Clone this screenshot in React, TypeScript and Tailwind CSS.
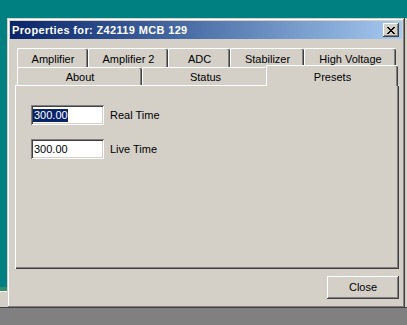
import React from "react";

const raised =
  "shadow-[inset_-1px_-1px_#404040,inset_1px_1px_#ffffff,inset_-2px_-2px_#808080,inset_2px_2px_#d4d0c8]";
const raisedDialog =
  "shadow-[inset_-1px_-1px_#404040,inset_1px_1px_#d4d0c8,inset_-2px_-2px_#808080,inset_2px_2px_#ffffff]";
const sunken =
  "shadow-[inset_1px_1px_#808080,inset_-1px_-1px_#ffffff,inset_2px_2px_#404040,inset_-2px_-2px_#d4d0c8]";

function Tab({ label, w, h }: { label: string; w: string; h: string }) {
  return (
    <div
      className={`${w} ${h} flex items-center justify-center pt-[2px] border-l border-t border-white rounded-t-[2px] shadow-[inset_-1px_0_#404040,inset_-2px_0_#808080] bg-[#d4d0c8] text-black`}
    >
      {label}
    </div>
  );
}

function Field({ value, label, selected }: { value: string; label: string; selected?: boolean }) {
  return (
    <div className="flex items-center">
      <div className={`w-[73px] h-[20px] bg-white ${sunken} flex items-center pl-[2px]`}>
        <span
          className={
            selected
              ? "bg-[#0a246a] text-white leading-[13px] pl-[1px]"
              : "text-black leading-[13px] pl-[1px]"
          }
        >
          {value}
        </span>
      </div>
      <span className="ml-[6px] text-black">{label}</span>
    </div>
  );
}

export default function App() {
  return (
    <div
      className="w-[407px] h-[325px] bg-[#008080] flex flex-col overflow-hidden text-[11px]"
      style={{ fontFamily: '"Liberation Sans", Arial, sans-serif' }}
    >
      <div className="h-[18px] shrink-0" />
      <div className="h-[290px] flex shrink-0">
        {/* left strip */}
        <div className="w-[7px] flex flex-col">
          <div className="flex-1 bg-[#008080]" />
          <div className="h-[4px] bg-[#2f8f6a]" />
          <div className="h-[1px] bg-white" />
          <div className="h-[15px] bg-[#d4d0c8]" />
          <div className="h-[1px] bg-[#404040]" />
        </div>
        {/* dialog */}
        <div className={`w-[398px] h-[290px] bg-[#d4d0c8] ${raisedDialog} flex flex-col pt-[3px] px-[3px]`}>
          <div className="h-[18px] flex items-center bg-gradient-to-r from-[#0a246a] to-[#a6caf0] pl-[2px] pr-[3px]">
            <span className="text-white font-bold text-[11px] tracking-[0.35px] leading-none flex-1">
              Properties for: Z42119 MCB 129
            </span>
            <div className={`w-[16px] h-[14px] bg-[#d4d0c8] ${raised} flex items-center justify-center`}>
              <svg width="8" height="7" viewBox="0 0 8 7" shapeRendering="crispEdges">
                <path
                  d="M0 0h2v1h-2zM6 0h2v1h-2zM1 1h2v1h-2zM5 1h2v1h-2zM2 2h4v1h-4zM3 3h2v1h-2zM2 4h4v1h-4zM1 5h2v1h-2zM5 5h2v1h-2zM0 6h2v1h-2zM6 6h2v1h-2z"
                  fill="#000"
                />
              </svg>
            </div>
          </div>
          <div className="h-[9px]" />
          <div className="ml-[5px] w-[384px] flex flex-col">
            <div className="h-[19px] flex pl-[2px]">
              <Tab label="Amplifier" w="w-[71px]" h="h-[19px]" />
              <Tab label="Amplifier 2" w="w-[80px]" h="h-[19px]" />
              <Tab label="ADC" w="w-[62px]" h="h-[19px]" />
              <Tab label="Stabilizer" w="w-[74px]" h="h-[19px]" />
              <Tab label="High Voltage" w="w-[92px]" h="h-[19px]" />
            </div>
            <div className="h-[18px] flex items-end pl-[2px] relative z-10">
              <Tab label="About" w="w-[125px]" h="h-[18px]" />
              <Tab label="Status" w="w-[126px]" h="h-[18px]" />
              <div className="w-[132px] h-[21px] -mx-[2px] -mb-[1px] flex justify-center pt-[3px] border-l border-t border-white rounded-t-[2px] shadow-[inset_-1px_0_#404040,inset_-2px_0_#808080] bg-[#d4d0c8] text-black">
                Presets
              </div>
            </div>
            <div className="h-[184px] border-l border-t border-white shadow-[inset_-1px_-1px_#404040,inset_-2px_-2px_#808080] flex flex-col pl-[15px] pt-[19px] gap-[14px]">
              <Field value="300.00" label="Real Time" selected />
              <Field value="300.00" label="Live Time" />
            </div>
          </div>
          <div className="h-[7px]" />
          <div className="flex justify-end pr-[3px]">
            <div className={`w-[72px] h-[23px] ${raised} flex items-center justify-center text-black`}>
              Close
            </div>
          </div>
        </div>
        {/* right strip */}
        <div className="w-[2px] flex flex-col bg-[#d4d0c8]">
          <div className="flex-1" />
          <div className="h-[1px] bg-[#404040]" />
        </div>
      </div>
      <div className="flex-1 bg-[#808080]" />
    </div>
  );
}
